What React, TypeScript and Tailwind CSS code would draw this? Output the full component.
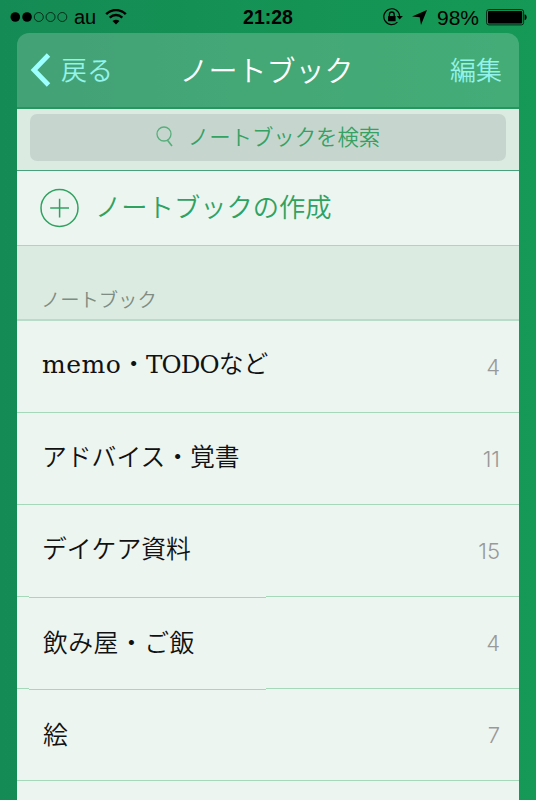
import React from "react";
import clsx from "clsx";

interface Notebook {
  id: number;
  name: string;
  count: number;
  splitDivider?: boolean;
  spaced?: boolean;
}

const notebooks: Notebook[] = [
  { id: 1, name: "memo・TODOなど", count: 4 },
  { id: 2, name: "アドバイス・覚書", count: 11 },
  { id: 3, name: "デイケア資料", count: 15, splitDivider: true },
  { id: 4, name: "飲み屋・ご飯", count: 4, splitDivider: true, spaced: true },
  { id: 5, name: "絵", count: 7, spaced: true },
];

const SignalDots = () => (
  <svg width="58" height="12" viewBox="0 0 58 12">
    {[0, 1, 2, 3, 4].map((i) => (
      <circle
        key={i}
        cx={5.3 + i * 11.75}
        cy="5"
        r={i < 2 ? 4.8 : 4.5}
        fill={i < 2 ? "#000" : "none"}
        stroke={i < 2 ? "none" : "#00150b"}
        strokeWidth="0.8"
      />
    ))}
  </svg>
);

const WifiIcon = () => (
  <svg width="22" height="16" viewBox="0 0 22 16" fill="none" stroke="#000">
    <path d="M1.2 5.2C6.8 -.3 15.2 -.3 20.8 5.2" strokeWidth="2.5" />
    <path d="M4.7 8.6C8.4 5.2 13.6 5.2 17.3 8.6" strokeWidth="2.4" />
    <path d="M11 15.4L7.5 11.9C9.5 10.2 12.5 10.2 14.5 11.9Z" fill="#000" stroke="none" />
  </svg>
);

const RotationLockIcon = () => (
  <svg width="20" height="18" viewBox="0 0 20 18" fill="none">
    <path d="M14.4 14.2A7.9 7.9 0 1 1 16.6 8" stroke="#000" strokeWidth="1.2" />
    <path d="M13.6 7.9H19.8L16.7 11.6Z" fill="#000" />
    <rect x="5" y="7.9" width="7.6" height="5.3" rx="0.5" fill="#000" />
    <path d="M6.4 8V6.4a2.4 2.4 0 0 1 4.8 0V8" stroke="#000" strokeWidth="1.3" />
  </svg>
);

const LocationIcon = () => (
  <svg width="15" height="15" viewBox="0 0 15 15">
    <path d="M15 0L9 15L7.7 7.3L0 6.5Z" fill="#000" />
  </svg>
);

const BatteryIcon = () => (
  <svg width="41" height="17" viewBox="0 0 41 17">
    <rect x="0.6" y="0.6" width="37" height="15.3" rx="2.2" fill="none" stroke="#00190d" strokeWidth="0.9" />
    <rect x="2" y="2" width="34.2" height="12.5" rx="1" fill="#000" />
    <path d="M38.6 5.3C41.3 5.8 41.3 10.7 38.6 11.2Z" fill="#000" />
  </svg>
);

const StatusBar = () => (
  <div className="grid h-[33px] grid-cols-3 items-center pt-[2px] font-['Liberation_Sans'] text-[20px] leading-none font-normal text-black">
    <div className="flex items-center pl-[10px]">
      <SignalDots />
      <span className="-mt-[2px] ml-[6px]">au</span>
      <span className="-mt-[2px] ml-[9px]">
        <WifiIcon />
      </span>
    </div>
    <div className="text-center text-[19.5px] font-bold">21:28</div>
    <div className="flex items-center justify-end pr-[9px]">
      <span className="-mt-[2px]">
        <RotationLockIcon />
      </span>
      <span className="mr-px ml-[9px]">
        <LocationIcon />
      </span>
      <span className="ml-[9px] text-[21px]">98%</span>
      <span className="ml-[7px]">
        <BatteryIcon />
      </span>
    </div>
  </div>
);

const Header = () => (
  <div className="flex h-[76px] items-center justify-between rounded-t-[12px] border-b-2 border-[#259660] bg-[#ffffff33] pr-[17px] pl-[13px] text-[26px] leading-none text-[#94f3ea]">
    <div className="flex w-[120px] items-center">
      <svg width="22" height="34" viewBox="0 0 22 34" fill="none">
        <path d="M18.5 2L4 17L18.5 32" stroke="#9dffff" strokeWidth="4.8" />
      </svg>
      <span className="-mt-[2px] ml-[9px]">戻る</span>
    </div>
    <h1 className="-mt-px text-[29px] whitespace-nowrap text-white">ノートブック</h1>
    <span className="-mt-[2px] w-[119px] text-right">編集</span>
  </div>
);

const SearchBar = () => (
  <div className="h-[62px] border-b border-[#48a07c] bg-[#dbebe1] px-[13px] pt-[5px]">
    <div className="flex h-[47px] items-center justify-center rounded-[7px] bg-[#c6d6ce] text-[21.4px] leading-none text-[#35a163]">
      <svg width="18" height="21" viewBox="0 0 18 21" fill="none" stroke="#58ae7c" strokeWidth="1.3" className="-mt-[2px]">
        <circle cx="8" cy="8" r="7" />
        <path d="M11.3 14L16 20" strokeWidth="1.6" />
      </svg>
      <span className="-mt-[4px] ml-[14px]">ノートブックを検索</span>
    </div>
  </div>
);

const CreateRow = () => (
  <div className="flex h-[75px] items-center border-b border-[#acd6bc] bg-[#ecf5f0] pl-[23px] text-[#2fa260]">
    <svg width="40" height="40" viewBox="0 0 40 40" fill="none" stroke="#2fa260" strokeWidth="1.5">
      <circle cx="19.5" cy="20" r="18.5" />
      <path d="M10.2 20H29M19.6 10.7V29.5" />
    </svg>
    <span className="-mt-[4px] ml-[15px] text-[26.3px] leading-none">ノートブックの作成</span>
  </div>
);

const Divider = ({ split }: { split?: boolean }) => (
  <div className="flex h-px">
    <div className="h-px w-[12px] bg-[#a5d8b8]" />
    <div className={clsx("h-px w-[237px] bg-[#a5d8b8]", split && "mt-px")} />
    <div className="h-px flex-1 bg-[#a5d8b8]" />
  </div>
);

// Latin runs are set in a slab serif, everything else stays in the page font
const NotebookName = ({ name }: { name: string }) => (
  <span className="flex items-baseline text-[24.8px] leading-none text-[#111]">
    {name.split(/([A-Za-z]+)/).map((part, i) =>
      /^[A-Z]+$/.test(part) ? (
        <span key={i} className="font-['DejaVu_Serif'] text-[24.5px] font-normal tracking-[-0.9px]">
          {part}
        </span>
      ) : /^[a-z]+$/.test(part) ? (
        <span key={i} className="font-['DejaVu_Serif'] text-[25px] font-normal tracking-[0.5px]">
          {part}
        </span>
      ) : (
        <span key={i}>{part}</span>
      )
    )}
  </span>
);

const NotebookRow = ({ notebook }: { notebook: Notebook }) => (
  <li className="h-[92px]">
    <div className="flex h-[91px] items-center justify-between pr-[19px] pl-[25px]">
      <span className={clsx(notebook.spaced ? "-mt-[3px] pl-px tracking-[0.5px]" : "-mt-[6px]")}>
        <NotebookName name={notebook.name} />
      </span>
      <span className="font-['Inter'] text-[22px] leading-none font-light text-[#999]">
        {notebook.count}
      </span>
    </div>
    <Divider split={notebook.splitDivider} />
  </li>
);

const App: React.FC = () => {
  return (
    <div
      lang="ja"
      className="h-[800px] w-[536px] overflow-hidden bg-gradient-to-r from-[#148b54] to-[#159955] font-['Noto_Sans_CJK_JP',sans-serif] font-[350]"
    >
      <StatusBar />
      <main className="mr-[17px] ml-[17px] h-[767px] overflow-hidden">
        <Header />
        <SearchBar />
        <CreateRow />
        <div className="flex h-[75px] items-end border-b-2 border-[#b9dcc8] bg-[#dbebe1] pb-[10px] pl-[24px] text-[19.3px] leading-none text-[#7e8c84]">
          ノートブック
        </div>
        <ul className="h-[480px] bg-[#ecf5f0]">
          {notebooks.map((notebook) => (
            <NotebookRow key={notebook.id} notebook={notebook} />
          ))}
        </ul>
      </main>
    </div>
  );
};

export default App;
